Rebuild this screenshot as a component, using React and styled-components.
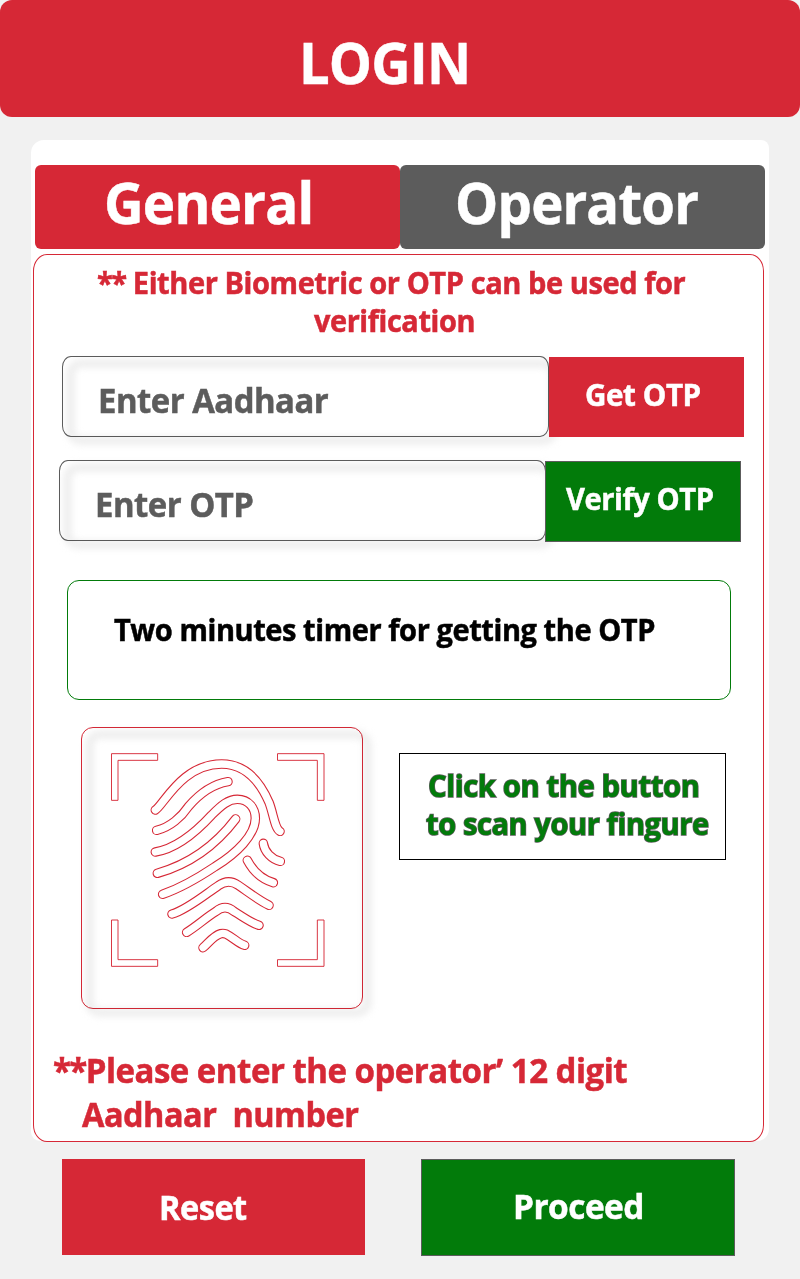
import React, { useLayoutEffect, useRef, useState } from 'react';
import styled, { createGlobalStyle } from 'styled-components';

const red = '#d62836';
const green = '#027b0a';
const gray = '#5c5c5c';

const GlobalStyle = createGlobalStyle`
  body { margin: 0; background: #f1f1f1; }
  * { box-sizing: border-box; }
  button { font: inherit; text-align: left; cursor: pointer; }
`;

const Page = styled.main`
  width: 800px;
  height: 1279px;
  overflow: hidden;
  display: flex;
  flex-direction: column;
  background: #f1f1f1;
  font-family: 'Open Sans', 'Noto Sans', sans-serif;
  font-weight: 700;
`;

const Header = styled.header`
  height: 117px;
  flex: none;
  padding: 28px 0 0 298.5px;
  border-radius: 12px;
  background: ${red};
  color: #fff;
`;

const Card = styled.section`
  width: 738px;
  height: 1001px;
  flex: none;
  margin: 23px 0 0 31px;
  padding: 25px 0 0 2px;
  border-radius: 13px 8px 12px 9px;
  background: #fff;
`;

const Tabs = styled.nav`
  display: flex;
  width: 730px;
  margin: 0 0 5px 2px;
`;

const Tab = styled.button`
  width: 365px;
  height: 84px;
  display: flex;
  align-items: flex-start;
  border: 0;
  border-radius: 6px;
  padding: 3.4px 0 0 ${(p) => p.$inset}px;
  background: ${(p) => (p.$active ? red : gray)};
  color: #fff;
`;

const Panel = styled.div`
  width: 731px;
  height: 888px;
  display: flex;
  flex-direction: column;
  border: 1px solid ${red};
  border-radius: 14px / 17px;
  background: #fff;
`;

const Notice = styled.div`
  height: 101px;
  padding: 8.5px 0 0 62.5px;
  color: ${red};
`;

const Field = styled.div`
  display: flex;
  align-items: flex-start;
  height: 104px;
  padding-left: ${(p) => p.$inset}px;
`;

/* A soft ring, shifted down and to the right, reads as the shadow of the outline. */
const Outlined = styled.div`
  position: relative;
  flex: none;
  width: ${(p) => p.$w}px;
  height: ${(p) => p.$h}px;
  border: 1px solid ${(p) => p.$color};
  border-radius: ${(p) => p.$radius};
  &::before {
    content: '';
    position: absolute;
    left: 3px;
    top: 2px;
    box-sizing: border-box;
    width: calc(100% + 7px);
    height: calc(100% + 7px);
    border: 9px solid #efefef;
    border-radius: 15px;
    filter: blur(3px);
    mix-blend-mode: multiply;
  }
`;

const InputText = styled.div`
  position: relative;
  padding: 23.3px 0 0 35px;
  color: ${gray};
`;

const Action = styled.button`
  position: relative;
  display: flex;
  align-items: flex-start;
  flex: none;
  width: ${(p) => p.$w}px;
  height: ${(p) => p.$h}px;
  margin: ${(p) => p.$margin || 0};
  padding: ${(p) => p.$pad};
  border: ${(p) => (p.$green ? `1px solid ${gray}` : '0')};
  background: ${(p) => (p.$green ? green : red)};
  color: #fff;
`;

const Timer = styled.div`
  width: 664px;
  height: 120px;
  margin: 16px 0 0 33px;
  padding: 31px 0 0 45.5px;
  border: 1px solid ${green};
  border-radius: 12px;
  color: #000;
`;

const ScanRow = styled.div`
  display: flex;
  align-items: flex-start;
  padding: 27px 0 0 47px;
`;

const Print = styled.svg`
  position: relative;
  display: block;
  width: 280px;
  height: 280px;
`;

const ScanHint = styled.button`
  display: flex;
  flex-direction: column;
  width: 327px;
  height: 107px;
  margin: 26px 0 0 36px;
  padding: 13px 0 0 26px;
  border: 1px solid #000;
  background: #fff;
  color: ${green};
`;

const Footnote = styled.div`
  padding: 40px 0 0 18.5px;
  color: ${red};
`;

const Footer = styled.footer`
  display: flex;
  align-items: flex-start;
  gap: 56px;
  padding: 18px 0 0 62px;
`;

const Line = styled.span`
  display: block;
  flex: none;
  width: ${(p) => p.$w}px;
  height: ${(p) => p.$lh}px;
  margin-left: ${(p) => p.$indent || 0}px;
  font-size: ${(p) => p.$size}px;
  line-height: ${(p) => p.$lh}px;
  letter-spacing: -0.015em;
  font-variant-ligatures: common-ligatures;
  white-space: pre;
  -webkit-text-stroke: ${(p) => p.$stroke || '0.5px currentColor'};
  paint-order: stroke fill;
  & > span {
    display: inline-block;
    transform-origin: 0 50%;
  }
`;

const Stars = styled.span`
  letter-spacing: -0.05em;
`;

/* Sets one line of text condensed to an exact measure. */
function Label({ size, w, lh = size * 1.2, indent, stroke, children }) {
  const ref = useRef(null);
  const [scale, setScale] = useState(1);
  useLayoutEffect(() => {
    setScale(w / ref.current.offsetWidth);
  }, [w, size]);
  return (
    <Line $size={size} $w={w} $lh={lh} $indent={indent} $stroke={stroke}>
      <span ref={ref} style={{ transform: `scaleX(${scale})` }}>{children}</span>
    </Line>
  );
}

const ridges = [
  'M256 285C280 272 335 147 455 147C525 147 568 195 597 262C610 295 614 340 630 349',
  'M260 346C300 337 335 305 355 275C385 240 425 208 474 200',
  'M256 411C310 402 370 360 425 300C455 270 475 253 502 253C535 253 556 278 556 310C556 360 500 415 435 455C390 485 330 520 278 538',
  'M262 475C350 450 430 400 497 312',
  'M580 385C583 410 605 433 631 439',
  'M532 436C548 466 575 493 610 503',
  'M306 597C350 585 410 535 445 512Q475 490 505 511C540 535 565 555 597 571',
  'M350 652C380 634 410 606 437 590Q465 566 493 590C520 606 545 625 567 631',
  'M399 698C415 685 430 662 452 656Q460 654 468 657C490 668 505 685 524 691',
];

function Fingerprint() {
  return (
    <Print viewBox="36 39 840 840" fill="none" strokeLinecap="round" aria-hidden="true">
      {ridges.map((d) => (
        <g key={d}>
          <path d={d} stroke={red} strokeWidth="28.5" />
          <path d={d} stroke="#fff" strokeWidth="22" />
        </g>
      ))}
      <g stroke={red} strokeWidth="2.8" strokeLinecap="butt">
        <path d="M124.500 116H263V136H144V256H124.500Z" />
        <path d="M762 116H622.500V136H742V256H762Z" />
        <path d="M124.500 754H263V734H144V615H124.500Z" />
        <path d="M762 754H622.500V734H742V615H762Z" />
      </g>
    </Print>
  );
}

export default function App() {
  const outline = `1.5px ${gray}`;
  return (
    <Page>
      <GlobalStyle />
      <Header><Label size={57.5} w={171}>LOGIN</Label></Header>
      <Card>
        <Tabs>
          <Tab $active $inset={68.5}><Label size={57} w={209.5}>General</Label></Tab>
          <Tab $inset={54.5}><Label size={57} w={243.5}>Operator</Label></Tab>
        </Tabs>
        <Panel>
          <Notice>
            <Label size={30} w={588.5} lh={38.4}><Stars>**</Stars> Either Biometric or OTP can be used for</Label>
            <Label size={30} w={161} lh={38.4} indent={217.5}>verification</Label>
          </Notice>
          <Field $inset={28}>
            <Outlined $w={487} $h={81} $color={gray} $radius="9px / 11px">
              <InputText><Label size={34} w={230}>Enter Aadhaar</Label></InputText>
            </Outlined>
            <Action $w={195} $h={80} $margin="1px 0 0" $pad="20.4px 0 0 35.5px">
              <Label size={29.5} w={115.5}>Get OTP</Label>
            </Action>
          </Field>
          <Field $inset={25}>
            <Outlined $w={487} $h={81} $color={gray} $radius="9px / 11px">
              <InputText><Label size={34} w={158.5}>Enter OTP</Label></InputText>
            </Outlined>
            <Action $green $w={196} $h={81} $margin="1px 0 0 -1px" $pad="19.4px 0 0 20px">
              <Label size={29.5} w={148}>Verify OTP</Label>
            </Action>
          </Field>
          <Timer><Label size={29.5} w={541}>Two minutes timer for getting the OTP</Label></Timer>
          <ScanRow>
            <Outlined $w={282} $h={282} $color={red} $radius="12px"><Fingerprint /></Outlined>
            <ScanHint>
              <Label size={29.5} w={271} lh={38.4} indent={2} stroke={outline}>Click on the button</Label>
              <Label size={29.5} w={283} lh={38.4} stroke={outline}>to scan your fingure</Label>
            </ScanHint>
          </ScanRow>
          <Footnote>
            <Label size={34} w={574.5} lh={43.5}><Stars>**</Stars>Please enter the operator’ 12 digit</Label>
            <Label size={34} w={277} lh={43.5} indent={29.5}>Aadhaar  number</Label>
          </Footnote>
        </Panel>
      </Card>
      <Footer>
        <Action $w={303} $h={96} $pad="28.4px 0 0 96.5px"><Label size={34} w={88}>Reset</Label></Action>
        <Action $green $w={314} $h={97} $pad="26.1px 0 0 90.5px"><Label size={34} w={130.5}>Proceed</Label></Action>
      </Footer>
    </Page>
  );
}
